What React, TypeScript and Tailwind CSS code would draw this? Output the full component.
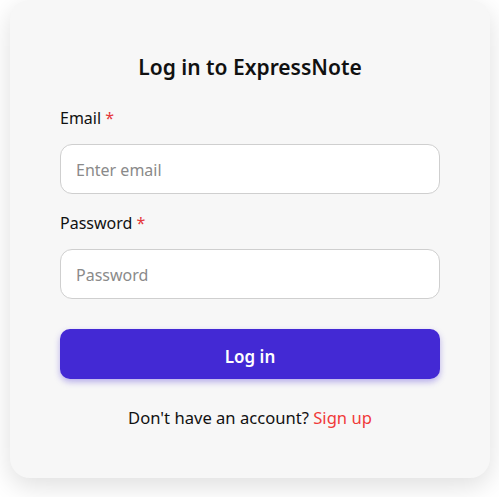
export default function App() {
  return (
    <div className="min-h-screen bg-white" style={{ fontFamily: '"Noto Sans", "Open Sans", sans-serif' }}>
      <div className="mx-[10px] w-[480px] rounded-[20px] bg-[#f7f7f7] px-[50px] pt-[52px] pb-[48px] shadow-[0_8px_26px_rgba(0,0,0,0.13)]">
        <h1 className="text-center text-[21px] font-semibold leading-[30px] text-[#111]">Log in to ExpressNote</h1>

        <form className="mt-[24px] flex flex-col" onSubmit={e => e.preventDefault()}>
          <label className="text-[16px] leading-[24px] text-[#111]">
            Email <span className="text-[#e5383b]">*</span>
          </label>
          <input
            type="email"
            placeholder="Enter email"
            className="mt-[14px] h-[50px] w-full rounded-[12px] border border-[#cfcfcf] bg-white px-[15px] pt-[2px] text-[16px] text-[#111] outline-none placeholder:text-[#8a8a8a]"
          />

          <label className="mt-[17px] text-[16px] leading-[24px] text-[#111]">
            Password <span className="text-[#e5383b]">*</span>
          </label>
          <input
            type="password"
            placeholder="Password"
            className="mt-[14px] h-[50px] w-full rounded-[12px] border border-[#cfcfcf] bg-white px-[15px] pt-[2px] text-[16px] text-[#111] outline-none placeholder:text-[#8a8a8a]"
          />

          <button
            type="submit"
            className="mt-[30px] h-[50px] w-full rounded-[10px] bg-[#4329d4] pt-[5px] text-[17px] font-semibold text-white shadow-[0_3px_6px_rgba(67,41,212,0.35)]"
          >
            Log in
          </button>
        </form>

        <p className="mt-[27px] text-center text-[16.6px] leading-[24px] text-[#111]">
          Don't have an account? <a href="#" className="text-[#f03a3a]">Sign up</a>
        </p>
      </div>
    </div>
  )
}
